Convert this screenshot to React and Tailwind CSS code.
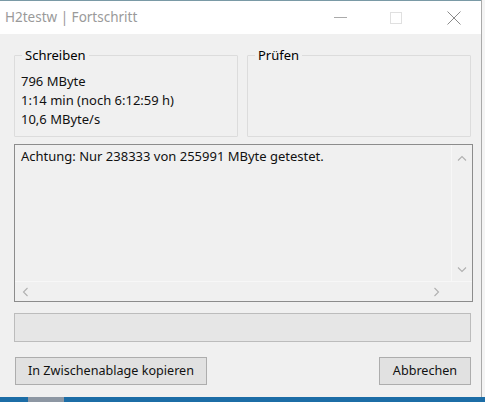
import React from 'react'

const font = { fontFamily: '"Noto Sans", "Open Sans", sans-serif' }

function GroupBox({ title, children }) {
  return (
    <fieldset className="w-[224px] h-[89px] border border-[#dcdcdc] rounded-[1px] px-[6px] pt-[5px]">
      <legend className="ml-[1px] px-[3px] text-[13px] leading-[15px] text-black">{title}</legend>
      {children}
    </fieldset>
  )
}

function Chevron({ d, className }) {
  return (
    <svg width="10" height="10" viewBox="0 0 10 10" className={className}>
      <path d={d} fill="none" stroke="#b0b0b0" strokeWidth="1.1" />
    </svg>
  )
}

export default function App() {
  return (
    <div className="w-[485px] h-[402px] overflow-hidden bg-[#1c6da6] flex flex-col" style={font}>
      <div className="flex h-[397px]">
        <div className="w-[482px] h-full bg-[#f0f0f0] border-r border-[#a9a9a9] flex flex-col">
          {/* title bar */}
          <div className="h-[34px] bg-white border-t border-[#7a9aa6] flex items-center">
            <div className="pl-[5px] text-[13.5px] text-[#9a9a9a] flex-1">H2testw | Fortschritt</div>
            <div className="w-[46px] flex justify-center">
              <div className="w-[13px] h-px bg-[#aaaaaa]" />
            </div>
            <div className="w-[46px] ml-[10px] flex justify-center">
              <div className="w-[12px] h-[12px] border border-[#e0e0e0]" />
            </div>
            <div className="w-[46px] ml-[12px] mr-[4px] flex justify-center">
              <svg width="14" height="14" viewBox="0 0 14 14">
                <path d="M0.5 0.5L13.5 13.5M13.5 0.5L0.5 13.5" stroke="#8a8a8a" strokeWidth="1" />
              </svg>
            </div>
          </div>

          {/* body */}
          <div className="flex flex-col pl-[14px] pr-[10px] pt-[14px] text-[13px] text-[#111]">
            <div className="flex gap-[9px]">
              <GroupBox title="Schreiben">
                <div className="leading-[19px] pt-[4px]">
                  <div>796 MByte</div>
                  <div>1:14 min (noch 6:12:59 h)</div>
                  <div>10,6 MByte/s</div>
                </div>
              </GroupBox>
              <GroupBox title="Prüfen" />
            </div>

            {/* log area */}
            <div className="mt-[7px] w-[459px] h-[158px] border border-[#8c8c8c] flex flex-col">
              <div className="flex flex-1">
                <div className="flex-1 pl-[6px] pt-[3px] leading-[17px]">
                  Achtung: Nur 238333 von 255991 MByte getestet.
                </div>
                <div className="w-[21px] border-l border-[#f7f7f7] flex flex-col items-center justify-between pt-[9px] pb-[7px]">
                  <Chevron d="M1 6.5L5 2.5L9 6.5" />
                  <Chevron d="M1 3.5L5 7.5L9 3.5" />
                </div>
              </div>
              <div className="h-[20px] flex border-t border-[#f7f7f7]">
                <div className="flex-1 flex items-center justify-between pl-[6px] pr-[10px]">
                  <Chevron d="M6.5 1L2.5 5L6.5 9" />
                  <Chevron d="M3.5 1L7.5 5L3.5 9" />
                </div>
                <div className="w-[21px]" />
              </div>
            </div>

            {/* progress bar */}
            <div className="mt-[11px] w-[457px] h-[29px] bg-[#e6e6e6] border border-[#bcbcbc]" />

            {/* buttons */}
            <div className="mt-[15px] flex justify-between w-[457px] pl-px">
              <button className="w-[192px] h-[28px] bg-[#e1e1e1] border border-[#adadad] text-[12.6px] text-[#111]">
                In Zwischenablage kopieren
              </button>
              <button className="w-[92px] h-[28px] bg-[#e1e1e1] border border-[#adadad] text-[12.6px] text-[#111]">
                Abbrechen
              </button>
            </div>
          </div>
        </div>
        <div className="flex-1 bg-[#f4f4f4]" />
      </div>
      <div className="flex-1 bg-[#1c6da6] flex">
        <div className="ml-[28px] w-[36px] h-full bg-[#8d97a3]" />
      </div>
    </div>
  )
}
